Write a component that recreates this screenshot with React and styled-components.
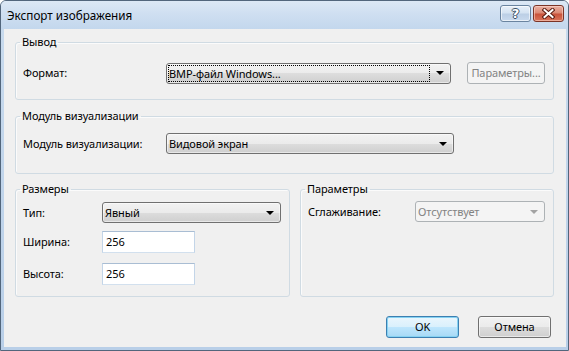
import React from 'react';
import styled, { createGlobalStyle, css } from 'styled-components';

const GlobalStyle = createGlobalStyle`
  html, body {
    margin: 0;
    padding: 0;
    background: #ffffff;
  }
  body {
    font-family: "Noto Sans", "Liberation Sans", sans-serif;
    font-size: 11px;
    letter-spacing: -0.1px;
    color: #000;
  }
  * {
    box-sizing: border-box;
  }
`;

const Window = styled.div`
  width: 569px;
  height: 351px;
  display: flex;
  flex-direction: column;
  border: 1px solid #52667c;
  border-radius: 6px 6px 0 0;
  background: linear-gradient(180deg, #c9dbee 0%, #b9cfe8 100%);
  overflow: hidden;
`;

const TitleBar = styled.div`
  height: 28px;
  flex: 0 0 28px;
  display: flex;
  align-items: flex-start;
  padding: 4px 4px 0 6px;
  background: linear-gradient(180deg, #dce8f5 0%, #cfdff1 45%, #c3d7ed 100%);
`;

const Title = styled.div`
  flex: 1;
  padding-top: 2px;
  font-size: 11.7px;
  letter-spacing: 0;
  line-height: 16px;
  color: #000;
`;

const CaptionButtons = styled.div`
  display: flex;
  gap: 2px;
`;

const CaptionButton = styled.div`
  width: 31px;
  height: 17px;
  display: flex;
  align-items: center;
  justify-content: center;
  border-radius: 3px;
  ${(p) =>
    p.$close
      ? css`
          border: 1px solid #7b3427;
          background: linear-gradient(180deg, #eab1a4 0%, #dc8a75 45%, #c9533b 55%, #d9765c 100%);
          box-shadow: inset 0 0 0 1px rgba(255, 220, 210, 0.55);
        `
      : css`
          border: 1px solid #6a84a0;
          background: linear-gradient(180deg, #e8f0f9 0%, #d5e3f2 45%, #bccfe5 55%, #c9daee 100%);
          box-shadow: inset 0 0 0 1px rgba(255, 255, 255, 0.6);
        `}
`;

const HelpGlyph = styled.span`
  font-family: "DejaVu Sans", sans-serif;
  font-weight: bold;
  font-size: 13px;
  line-height: 13px;
  color: #ffffff;
  text-shadow: -1px 0 #3b4f66, 1px 0 #3b4f66, 0 -1px #3b4f66, 0 1px #3b4f66;
`;

const Client = styled.div`
  flex: 1;
  display: flex;
  flex-direction: column;
  margin: 0 2px 3px 3px;
  padding: 5px 12px 0 11px;
  background: #f0f0f0;
`;

const GroupBox = styled.fieldset`
  margin: ${(p) => p.$mt || 0}px 0 0 0;
  padding: ${(p) => p.$pt}px 8px ${(p) => p.$pb}px 7px;
  min-width: 0;
  border: 1px solid #d0dbe3;
  border-radius: 3px;
  box-shadow: inset 1px 1px 0 #fbfbfb;
  flex: ${(p) => p.$flex || 'none'};
  width: ${(p) => (p.$width ? p.$width + 'px' : 'auto')};
`;

const Legend = styled.legend`
  margin-left: -3px;
  padding: 0 2px;
  line-height: 16px;
  color: #000;
`;

const GroupRow = styled.div`
  display: flex;
  gap: 10px;
  margin-top: 7px;
`;

const Row = styled.div`
  display: flex;
  align-items: center;
  margin-top: ${(p) => p.$mt || 0}px;
`;

const Label = styled.div`
  width: ${(p) => p.$width}px;
  flex: none;
  line-height: 16px;
`;

const Combo = styled.div`
  width: ${(p) => p.$width}px;
  height: 21px;
  display: flex;
  align-items: stretch;
  padding: 1px;
  border-radius: 3px;
  ${(p) =>
    p.$disabled
      ? css`
          border: 1px solid #adb2b5;
          background: #f4f4f4;
          color: #838383;
        `
      : css`
          border: 1px solid #707070;
          background: linear-gradient(180deg, #f2f2f2 0%, #ebebeb 50%, #dddddd 50%, #cfcfcf 100%);
          box-shadow: inset 0 0 0 1px rgba(255, 255, 255, 0.5);
          color: #000;
        `}
`;

const ComboText = styled.div`
  flex: 1;
  display: flex;
  align-items: center;
  padding-left: 1px;
  white-space: nowrap;
  line-height: 15px;
  ${(p) =>
    p.$focused &&
    css`
      outline: 1px dotted #000;
      outline-offset: -1px;
    `}
`;

const ComboArrow = styled.div`
  width: 19px;
  flex: none;
  display: flex;
  align-items: center;
  justify-content: center;
  &::after {
    content: '';
    border-left: 4px solid transparent;
    border-right: 4px solid transparent;
    border-top: 4px solid ${(p) => (p.$disabled ? '#a3a3a3' : '#000')};
  }
`;

const TextInput = styled.input`
  width: 93px;
  height: 22px;
  margin: 0;
  padding: 0 0 2px 3px;
  border: 1px solid;
  border-color: #a9bdd3 #c3d5e8 #d2e0ee #c3d5e8;
  background: #fff;
  font-family: "Noto Sans", "Liberation Sans", sans-serif;
  font-size: 11px;
  color: #000;
  outline: none;
`;

const Button = styled.div`
  width: ${(p) => p.$width}px;
  height: 22px;
  flex: none;
  display: flex;
  align-items: center;
  justify-content: center;
  border-radius: 3px;
  line-height: 16px;
  ${(p) =>
    p.$disabled
      ? css`
          border: 1px solid #adb2b5;
          background: #f4f4f4;
          color: #838383;
        `
      : p.$default
      ? css`
          border: 1px solid #3c7fb1;
          background: linear-gradient(180deg, #eaf6fd 0%, #d9f0fc 50%, #bee6fd 50%, #a7d9f5 100%);
          box-shadow: inset 0 0 0 1px #86d2f2;
          color: #000;
        `
      : css`
          border: 1px solid #707070;
          background: linear-gradient(180deg, #f2f2f2 0%, #ebebeb 50%, #dddddd 50%, #cfcfcf 100%);
          box-shadow: inset 0 0 0 1px rgba(255, 255, 255, 0.55);
          color: #000;
        `}
`;

const ButtonBar = styled.div`
  display: flex;
  justify-content: flex-end;
  gap: 19px;
  margin-top: 19px;
  padding-right: 3px;
`;

function CloseIcon() {
  return (
    <svg width="13" height="11" viewBox="0 0 13 11">
      <path d="M2.5 2 L10.5 9 M10.5 2 L2.5 9" stroke="#5a1d12" strokeWidth="4" strokeLinecap="square" />
      <path d="M2.5 2 L10.5 9 M10.5 2 L2.5 9" stroke="#ffffff" strokeWidth="2" strokeLinecap="square" />
    </svg>
  );
}

function ComboBox({ value, width, focused, disabled }) {
  return (
    <Combo $width={width} $disabled={disabled}>
      <ComboText $focused={focused}>{value}</ComboText>
      <ComboArrow $disabled={disabled} />
    </Combo>
  );
}

export default function App() {
  return (
    <>
      <GlobalStyle />
      <Window>
        <TitleBar>
          <Title>Экспорт изображения</Title>
          <CaptionButtons>
            <CaptionButton>
              <HelpGlyph>?</HelpGlyph>
            </CaptionButton>
            <CaptionButton $close>
              <CloseIcon />
            </CaptionButton>
          </CaptionButtons>
        </TitleBar>

        <Client>
          <GroupBox $pt={12} $pb={15}>
            <Legend>Вывод</Legend>
            <Row>
              <Label $width={143}>Формат:</Label>
              <ComboBox value="BMP-файл Windows..." width={288} focused />
              <Button $width={78} $disabled style={{ marginLeft: 16 }}>
                Параметры...
              </Button>
            </Row>
          </GroupBox>

          <GroupBox $mt={8} $pt={9} $pb={19}>
            <Legend>Модуль визуализации</Legend>
            <Row>
              <Label $width={143}>Модуль визуализации:</Label>
              <ComboBox value="Видовой экран" width={288} />
            </Row>
          </GroupBox>

          <GroupRow>
            <GroupBox $width={275} $pt={5} $pb={11}>
              <Legend>Размеры</Legend>
              <Row>
                <Label $width={79}>Тип:</Label>
                <ComboBox value="Явный" width={179} />
              </Row>
              <Row $mt={8}>
                <Label $width={79}>Ширина:</Label>
                <TextInput defaultValue="256" />
              </Row>
              <Row $mt={10}>
                <Label $width={79}>Высота:</Label>
                <TextInput defaultValue="256" />
              </Row>
            </GroupBox>
            <GroupBox $flex="1" $pt={4} $pb={11}>
              <Legend>Параметры</Legend>
              <Row>
                <Label $width={107}>Сглаживание:</Label>
                <ComboBox value="Отсутствует" width={134} disabled />
              </Row>
            </GroupBox>
          </GroupRow>

          <ButtonBar>
            <Button $width={73} $default>
              OK
            </Button>
            <Button $width={73}>Отмена</Button>
          </ButtonBar>
        </Client>
      </Window>
    </>
  );
}
